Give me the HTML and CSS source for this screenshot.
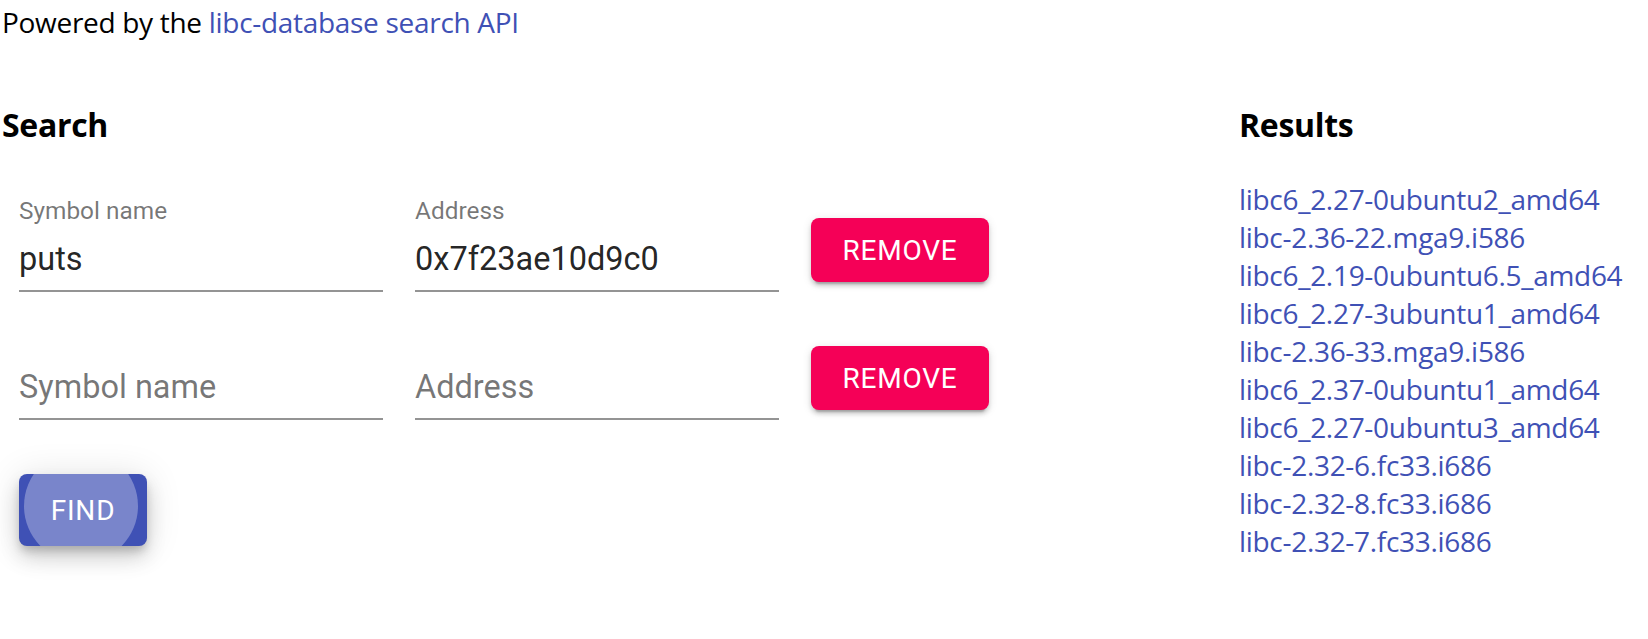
FILE: index.html
```html
<!DOCTYPE html>
<html lang="en">
<head>
<meta charset="utf-8">
<title>libc-database search</title>
<link rel="stylesheet" href="styles.css">
</head>
<body>
<div class="page">
  <p class="powered">Powered by the <a href="#">libc-database search API</a></p>
  <div class="grid">
    <section class="search">
      <h3 class="heading">Search</h3>
      <div class="form">
        <div class="row">
          <div class="field">
            <label class="label">Symbol name</label>
            <div class="base"><input class="input" value="puts"></div>
          </div>
          <div class="field">
            <label class="label">Address</label>
            <div class="base"><input class="input" value="0x7f23ae10d9c0"></div>
          </div>
          <button class="btn remove">Remove</button>
        </div>
        <div class="row">
          <div class="field">
            <label class="label empty"></label>
            <div class="base"><input class="input" placeholder="Symbol name"></div>
          </div>
          <div class="field">
            <label class="label empty"></label>
            <div class="base"><input class="input" placeholder="Address"></div>
          </div>
          <button class="btn remove">Remove</button>
        </div>
        <div class="actions">
          <button class="btn find"><span class="ripple"></span><span class="btn-text">Find</span></button>
        </div>
      </div>
    </section>
    <section class="results">
      <h3 class="heading">Results</h3>
      <ul class="list">
        <li><a href="#">libc6_2.27-0ubuntu2_amd64</a></li>
        <li><a href="#">libc-2.36-22.mga9.i586</a></li>
        <li><a href="#">libc6_2.19-0ubuntu6.5_amd64</a></li>
        <li><a href="#">libc6_2.27-3ubuntu1_amd64</a></li>
        <li><a href="#">libc-2.36-33.mga9.i586</a></li>
        <li><a href="#">libc6_2.37-0ubuntu1_amd64</a></li>
        <li><a href="#">libc6_2.27-0ubuntu3_amd64</a></li>
        <li><a href="#">libc-2.32-6.fc33.i686</a></li>
        <li><a href="#">libc-2.32-8.fc33.i686</a></li>
        <li><a href="#">libc-2.32-7.fc33.i686</a></li>
      </ul>
    </section>
  </div>
</div>
</body>
</html>
```
FILE: styles.css
```css
html, body {
  margin: 0;
  padding: 0;
  background: #ffffff;
}
body {
  font-family: "Open Sans", "Noto Sans", sans-serif;
  font-size: 28px;
  letter-spacing: -0.3px;
  color: #000000;
  min-height: 639px;
}
a {
  color: #3f51b5;
  text-decoration: none;
}
.page {
  padding-left: 2px;
  padding-bottom: 80px;
}
.powered {
  margin: 0;
  padding-top: 3px;
  line-height: 38px;
}
.grid {
  display: grid;
  grid-template-columns: 1234px 1fr;
  margin-top: 64px;
}
.heading {
  margin: 0;
  font-size: 32px;
  font-weight: 700;
  line-height: 40px;
  letter-spacing: -0.3px;
}
.form {
  padding-left: 17px;
  margin-top: 51px;
  display: flex;
  flex-direction: column;
  gap: 32px;
}
.row {
  display: flex;
  align-items: flex-start;
  gap: 32px;
}
.field {
  width: 364px;
  display: flex;
  flex-direction: column;
  font-family: Roboto, sans-serif;
  letter-spacing: 0;
}
.label {
  display: block;
  box-sizing: border-box;
  height: 32px;
  padding-top: 3px;
  font-size: 24.4px;
  line-height: 24px;
  color: rgba(0, 0, 0, 0.54);
}
.base {
  box-sizing: border-box;
  height: 64px;
  padding: 12px 0 12px;
  border-bottom: 2px solid rgba(0, 0, 0, 0.42);
}
.input {
  display: block;
  width: 100%;
  box-sizing: border-box;
  border: 0;
  outline: 0;
  padding: 0;
  margin: 0;
  background: transparent;
  font-family: Roboto, sans-serif;
  font-size: 32.5px;
  line-height: 38px;
  height: 38px;
  color: rgba(0, 0, 0, 0.87);
}
.input::placeholder {
  color: rgba(0, 0, 0, 0.54);
  opacity: 1;
}
.btn {
  position: relative;
  overflow: hidden;
  border: 0;
  margin: 0;
  border-radius: 8px;
  color: #ffffff;
  font-family: Roboto, sans-serif;
  font-weight: 400;
  font-size: 28px;
  letter-spacing: 0.8px;
  text-transform: uppercase;
  cursor: pointer;
}
.remove {
  width: 178px;
  height: 64px;
  margin-top: 22px;
  padding: 0;
  background: #f50057;
  box-shadow: 0 6px 2px -4px rgba(0, 0, 0, 0.2), 0 4px 4px 0 rgba(0, 0, 0, 0.14), 0 2px 10px 0 rgba(0, 0, 0, 0.12);
}
.actions {
  display: flex;
  margin-top: 22px;
}
.find {
  width: 128px;
  height: 72px;
  padding: 0;
  background: #3f51b5;
  box-shadow: 0 6px 10px -2px rgba(0, 0, 0, 0.2), 0 12px 20px 0 rgba(0, 0, 0, 0.14), 0 2px 36px 0 rgba(0, 0, 0, 0.12);
}
.ripple {
  position: absolute;
  left: 5px;
  top: -25px;
  width: 114px;
  height: 114px;
  border-radius: 50%;
  background: rgba(255, 255, 255, 0.3);
}
.btn-text {
  position: relative;
}
.results {
  padding-left: 1px;
}
.results .heading {
  margin-left: 2px;
}
.list {
  list-style: none;
  margin: 35px 0 0 2px;
  padding: 0;
  line-height: 38px;
}
```
